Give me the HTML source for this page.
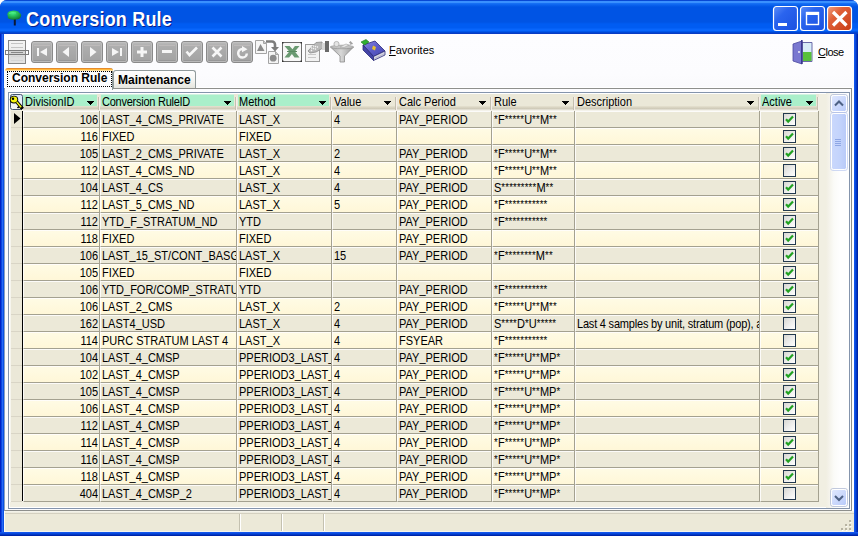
<!DOCTYPE html>
<html><head><meta charset="utf-8">
<style>
*{box-sizing:border-box}
html,body{margin:0;padding:0}
body{width:858px;height:536px;overflow:hidden;position:relative;background:#fff;font-family:"Liberation Sans",sans-serif;font-size:11px;color:#000}
.a{position:absolute}
#frame{position:absolute;left:0;top:0;width:858px;height:536px;background:linear-gradient(90deg,#0020c4 0,#0020c4 1px,#0a46de 1px,#0a46de 2px,#2a68f6 2px,#2a68f6 3px,#0a52e4 3px,#0a52e4 854px,#1256ec 854px,#1256ec 855px,#0a48dc 855px,#0a48dc 856px,#0038c4 856px,#0038c4 857px,#0024a8 857px);border-radius:7px 7px 0 0}
#fbot{position:absolute;left:0;top:532px;width:858px;height:4px;background:linear-gradient(180deg,#1256ec 0,#1256ec 1px,#0a48dc 1px,#0a48dc 2px,#0038c4 2px,#0038c4 3px,#0024a8 3px)}
#title{position:absolute;left:0;top:0;width:858px;height:34px;border-radius:7px 7px 0 0;
 background:linear-gradient(180deg,#0848d4 0,#0848d4 1px,#3a90fe 1px,#3a90fe 3px,#1a74f6 3px,#0a62ee 5px,#0054e4 7px,#0054e4 22px,#005cf2 24px,#005cf2 28px,#0866fc 29px,#0866fc 31px,#0056ea 31px,#0056ea 32px,#0046d4 32px,#0046d4 33px,#083cc4 33px,#083cc4 34px)}
#ttext{position:absolute;left:26px;top:9px;font-weight:bold;font-size:18px;letter-spacing:0.2px;color:#fff;text-shadow:1px 1px 0 #0a1e8c;transform:scaleY(1.08);transform-origin:0 0;white-space:nowrap}
#client{position:absolute;left:4px;top:34px;width:850px;height:498px;background:linear-gradient(180deg,#fffbff 0,#fdfdff 3px,#fcfcfe 40px,#fafafc 53px,#fff 53px,#fff 100%)}
.tb{position:absolute;top:41px;width:22px;height:22px}
#tabbody{position:absolute;left:4px;top:88px;width:848px;height:423px;background:#fcfcfe;border:1px solid #8e8f8c;border-left-color:#8ba0c0}
#grid{position:absolute;left:8px;top:92px;width:842px;height:417px;border:1px solid #8494ac;background:#fcfcfe}
#gridin{position:absolute;left:9px;top:93px;width:840px;height:415px;border:1px solid #fff;background:#f1efe2}
.hc{position:absolute;top:94px;height:17px;background:#ebe8d8}
.hc::before{content:"";position:absolute;left:0;right:0;top:12px;height:5px;background:linear-gradient(180deg,#e6e2d0 0,#ddd8c6 1px,#d4cfbd 2px,#cdc8b6 3px,#f4f2ea 4px)}
.hc .gb{position:absolute;left:1px;top:0;right:3px;height:12px}
.hc.first .gb{left:0}
.hc.g .gb{background:linear-gradient(180deg,#d2f2e0 0,#d2f2e0 1px,#aaefca 1px)}
.hc .ht{position:absolute;left:2px;top:1px;line-height:12px;white-space:nowrap;transform:scaleY(1.125);transform-origin:0 2px}
.hc::after{content:"";position:absolute;right:1px;top:3px;width:1px;height:13px;background:#c4bfb0;box-shadow:1px 0 0 #f6eeea}
.dd{position:absolute;right:6px;top:7px;width:7px;height:4px}
.row{position:absolute;left:0;width:858px;height:17px}
.c{position:absolute;top:0;height:17px;border-right:1px solid #a4a190;border-bottom:1px solid #a4a190;border-left:1px solid rgba(255,255,255,.85);border-top:1px solid rgba(255,255,255,.85);padding:0 1px;line-height:15px;white-space:nowrap;overflow:hidden}
.ra .c{background:#ece9d8}
.rb .c{background:linear-gradient(180deg,#fffbe4,#fff7d8)}
.num{text-align:right;padding-right:1px}
.desc{letter-spacing:-0.2px}
.us{font-style:normal;position:relative;top:-1px}
.as{font-style:normal;font-size:9.5px;letter-spacing:0.2px;position:relative;top:-1px}
.c b{font-weight:normal;display:inline-block;transform:scaleY(1.125);transform-origin:0 3px}
.cb{position:absolute;left:22px;top:1px;width:13px;height:13px;border:1px solid #22384e;background:linear-gradient(135deg,#d8d8d2 0,#ececea 50%,#fff 100%)}
.ck{position:absolute;left:-1px;top:-1px}
#ind{position:absolute;left:10px;top:111px;width:12px;height:391px;background:repeating-linear-gradient(180deg,#ebe8d8 0,#ebe8d8 16px,#d9d5c6 16px,#d9d5c6 17px);border-left:1px solid #f6f5ee}
#indl{position:absolute;left:22px;top:111px;width:1px;height:390px;background:#000}
#sb{position:absolute;left:826px;top:93px;width:23px;height:415px;background:linear-gradient(90deg,#f1efe2 0,#f3f1e7 2px,#fbfbf8 8px,#fefefe 14px,#fefefe 100%)}
#status{position:absolute;left:4px;top:511px;width:850px;height:21px;background:linear-gradient(180deg,#f6f5ee 0,#ebe8da 2px,#d4d0c0 2px,#d4d0c0 3px,#ece9d8 3px,#ece9d8 20px,#f4f3ec 20px);border-left:1px solid #fafaf6}
</style></head><body>
<div id="frame"></div>
<div id="fbot"></div>
<div id="title"></div>
<div id="ttext">Conversion Rule</div>
<div id="client"></div>
<svg class="a" style="left:0;top:0" width="858" height="70" viewBox="0 0 858 70">
<defs>
<linearGradient id="bg" x1="0" y1="0" x2="0" y2="1"><stop offset="0" stop-color="#bebebe"/><stop offset="0.18" stop-color="#afafaf"/><stop offset="1" stop-color="#a2a2a2"/></linearGradient>
<linearGradient id="lst" x1="0" y1="0" x2="0" y2="1"><stop offset="0" stop-color="#f4f4f4"/><stop offset="0.45" stop-color="#ececec"/><stop offset="0.55" stop-color="#d8d8d8"/><stop offset="1" stop-color="#e4e4e4"/></linearGradient>
</defs>
<!-- list icon -->
<rect x="8.5" y="40.5" width="17" height="23" fill="url(#lst)" stroke="#858585"/>
<path d="M11 43.5h12M11 47.5h12" stroke="#c4c4c4" stroke-width="1"/><path d="M11 56.5h12M11 60.5h12" stroke="#d4d4d4" stroke-width="1"/>
<rect x="5.5" y="50.5" width="23" height="4" fill="none" stroke="#7c7c7c"/>
<rect x="9" y="51" width="16" height="3" fill="#d4d4d4"/>
<path d="M11 52.5h12" stroke="#888" />
<g transform="translate(31,41)">
<rect x="0.5" y="0.5" width="21" height="21" rx="2.5" fill="url(#bg)" stroke="#8a8a8a"/>
<rect x="1.5" y="1.5" width="19" height="19" rx="1.5" fill="none" stroke="#c2c2c2" stroke-opacity="0.75"/>
<path d="M3 4.5h16" stroke="#cfc8c8" stroke-opacity="0.45"/>
<path d="M2.5 19.5h17" stroke="#8f8f8f" stroke-opacity="0.6"/>
<rect x="6" y="7" width="2" height="8" fill="#f6f6f6"/><path d="M9 11 L16 7 L16 15 Z" fill="#f6f6f6"/></g><g transform="translate(56,41)">
<rect x="0.5" y="0.5" width="21" height="21" rx="2.5" fill="url(#bg)" stroke="#8a8a8a"/>
<rect x="1.5" y="1.5" width="19" height="19" rx="1.5" fill="none" stroke="#c2c2c2" stroke-opacity="0.75"/>
<path d="M3 4.5h16" stroke="#cfc8c8" stroke-opacity="0.45"/>
<path d="M2.5 19.5h17" stroke="#8f8f8f" stroke-opacity="0.6"/>
<path d="M6.5 11 L13 6 L13 16 Z" fill="#f6f6f6"/></g><g transform="translate(81,41)">
<rect x="0.5" y="0.5" width="21" height="21" rx="2.5" fill="url(#bg)" stroke="#8a8a8a"/>
<rect x="1.5" y="1.5" width="19" height="19" rx="1.5" fill="none" stroke="#c2c2c2" stroke-opacity="0.75"/>
<path d="M3 4.5h16" stroke="#cfc8c8" stroke-opacity="0.45"/>
<path d="M2.5 19.5h17" stroke="#8f8f8f" stroke-opacity="0.6"/>
<path d="M9 6 L15.5 11 L9 16 Z" fill="#f6f6f6"/></g><g transform="translate(106,41)">
<rect x="0.5" y="0.5" width="21" height="21" rx="2.5" fill="url(#bg)" stroke="#8a8a8a"/>
<rect x="1.5" y="1.5" width="19" height="19" rx="1.5" fill="none" stroke="#c2c2c2" stroke-opacity="0.75"/>
<path d="M3 4.5h16" stroke="#cfc8c8" stroke-opacity="0.45"/>
<path d="M2.5 19.5h17" stroke="#8f8f8f" stroke-opacity="0.6"/>
<path d="M6 7 L13 11 L6 15 Z" fill="#f6f6f6"/><rect x="14" y="7" width="2" height="8" fill="#f6f6f6"/></g><g transform="translate(131,41)">
<rect x="0.5" y="0.5" width="21" height="21" rx="2.5" fill="url(#bg)" stroke="#8a8a8a"/>
<rect x="1.5" y="1.5" width="19" height="19" rx="1.5" fill="none" stroke="#c2c2c2" stroke-opacity="0.75"/>
<path d="M3 4.5h16" stroke="#cfc8c8" stroke-opacity="0.45"/>
<path d="M2.5 19.5h17" stroke="#8f8f8f" stroke-opacity="0.6"/>
<rect x="9.5" y="6" width="3" height="10" fill="#f6f6f6"/><rect x="6" y="9.5" width="10" height="3" fill="#f6f6f6"/></g><g transform="translate(156,41)">
<rect x="0.5" y="0.5" width="21" height="21" rx="2.5" fill="url(#bg)" stroke="#8a8a8a"/>
<rect x="1.5" y="1.5" width="19" height="19" rx="1.5" fill="none" stroke="#c2c2c2" stroke-opacity="0.75"/>
<path d="M3 4.5h16" stroke="#cfc8c8" stroke-opacity="0.45"/>
<path d="M2.5 19.5h17" stroke="#8f8f8f" stroke-opacity="0.6"/>
<rect x="6" y="9" width="10" height="3" fill="#f6f6f6"/></g><g transform="translate(181,41)">
<rect x="0.5" y="0.5" width="21" height="21" rx="2.5" fill="url(#bg)" stroke="#8a8a8a"/>
<rect x="1.5" y="1.5" width="19" height="19" rx="1.5" fill="none" stroke="#c2c2c2" stroke-opacity="0.75"/>
<path d="M3 4.5h16" stroke="#cfc8c8" stroke-opacity="0.45"/>
<path d="M2.5 19.5h17" stroke="#8f8f8f" stroke-opacity="0.6"/>
<path d="M5.5 10.5 L8.5 14 L16 6.5" fill="none" stroke="#f6f6f6" stroke-width="2.6"/></g><g transform="translate(206,41)">
<rect x="0.5" y="0.5" width="21" height="21" rx="2.5" fill="url(#bg)" stroke="#8a8a8a"/>
<rect x="1.5" y="1.5" width="19" height="19" rx="1.5" fill="none" stroke="#c2c2c2" stroke-opacity="0.75"/>
<path d="M3 4.5h16" stroke="#cfc8c8" stroke-opacity="0.45"/>
<path d="M2.5 19.5h17" stroke="#8f8f8f" stroke-opacity="0.6"/>
<path d="M6.5 6.5 L15.5 15.5 M15.5 6.5 L6.5 15.5" stroke="#f6f6f6" stroke-width="2.6"/></g><g transform="translate(231,41)">
<rect x="0.5" y="0.5" width="21" height="21" rx="2.5" fill="url(#bg)" stroke="#8a8a8a"/>
<rect x="1.5" y="1.5" width="19" height="19" rx="1.5" fill="none" stroke="#c2c2c2" stroke-opacity="0.75"/>
<path d="M3 4.5h16" stroke="#cfc8c8" stroke-opacity="0.45"/>
<path d="M2.5 19.5h17" stroke="#8f8f8f" stroke-opacity="0.6"/>
<path d="M11.5 8 A4.3 4.3 0 1 0 15.8 12.5" fill="none" stroke="#f6f6f6" stroke-width="2.5"/><path d="M11 5 L16.5 8.2 L11 11.2 Z" fill="#f6f6f6"/></g>
<!-- copy/convert icon -->
<g>
<path d="M255.5 40.5 h8 l3 3 v10 h-11 z" fill="#f6f6f6" stroke="#a4a4a4"/>
<path d="M263.5 40.5 v3 h3" fill="#c8c8c8" stroke="#a4a4a4"/>
<path d="M257 51 L260.5 44 L264.5 51 Z" fill="#8a8a8a"/>
<path d="M268.5 51.5 h7 l3 3 v9 h-10 z" fill="#f4f4f4" stroke="#a4a4a4"/>
<path d="M275.5 51.5 v3 h3" fill="#c8c8c8" stroke="#a4a4a4"/>
<circle cx="273.2" cy="58.2" r="3.4" fill="#8c8c8c"/>
<path d="M266 41.5 h6 a3 3 0 0 1 3 3 v3" fill="none" stroke="#7c7c7c" stroke-width="2.6"/>
<path d="M271 47 h8 l-4 4.5 z" fill="#7c7c7c"/>
</g>
<!-- excel icon -->
<g>
<rect x="282.5" y="42.5" width="19" height="19" fill="#f8f8f8" stroke="#6c6c6c"/>
<path d="M282 42h1.5v1.5h-1.5zM300.5 42h1.5v1.5h-1.5zM282 60.5h1.5v1.5h-1.5zM300.5 60.5h1.5v1.5h-1.5z" fill="#333"/>
<path d="M284.5 46 h5 l3 3.2 l2.4 -3.2 h4.6 l-4.6 5.6 l4.6 5.8 h-5 l-2.6 -3.4 l-2.8 3.4 h-4.6 l4.8 -5.8 z" fill="#6a9a72"/>
<path d="M287 51.5 h10" stroke="#5a8a62" stroke-width="1"/>
</g>
<!-- clipboard/hand icon -->
<g>
<rect x="305.5" y="44.5" width="14" height="17" fill="#f2f2f2" stroke="#9a9a9a"/>
<path d="M308 54.5h8M308 57.5h8" stroke="#c8c8c8"/>
<path d="M308 51 L316 42.5 L322 42 L323 48 L316 52 L310 53 Z" fill="#b8b8b8" stroke="#8a8a8a" stroke-width="0.8"/>
<path d="M311 48.5l1 -1M313 46.5l1 -1M313 49l1 -1M315 47l1 -1M315 49.5l1 -1M317 47.5l1 -1M311 51l1 -1" stroke="#f4f4f4" stroke-width="1.2"/>
<rect x="322" y="43" width="3" height="7" fill="#d8d8d8"/>
<rect x="325" y="41" width="4" height="11" fill="#6a6a6a"/>
</g>
<!-- funnel -->
<g>
<defs><linearGradient id="fn" x1="0" y1="0" x2="1" y2="0"><stop offset="0" stop-color="#a8a8a8"/><stop offset="0.45" stop-color="#d8d8d8"/><stop offset="1" stop-color="#9a9a9a"/></linearGradient></defs>
<path d="M330.5 47 L353.5 47 L344.5 56 L344.5 62 L340 62 L340 56 Z" fill="url(#fn)" stroke="#8c8c8c" stroke-width="0.8"/>
<ellipse cx="342" cy="47" rx="11.5" ry="1.8" fill="#c4c4c4" stroke="#8c8c8c" stroke-width="0.6"/>
<circle cx="336.5" cy="44" r="2.6" fill="#e4e4e4" stroke="#a0a0a0" stroke-width="0.7"/>
<path d="M340 47 L346 44 L349 45 L344 47.5 Z" fill="#e8e8e8" stroke="#a4a4a4" stroke-width="0.6"/>
<path d="M349 45 L352 42.5 L353 44 Z" fill="#9a9a9a"/>
<path d="M350.5 41 l1.5 1.5 l-1.5 1.5 l-1.5 -1.5 z" fill="#a0a0a0"/>
</g>
<!-- book -->
<g>
<defs><linearGradient id="bk" x1="0" y1="0" x2="1" y2="1"><stop offset="0" stop-color="#8888e0"/><stop offset="0.5" stop-color="#5c5cc8"/><stop offset="1" stop-color="#4848b0"/></linearGradient></defs>
<path d="M363 45 L375 41 L385 51 L373.5 56.5 Z" fill="url(#bk)" stroke="#2a2a78" stroke-width="0.8"/>
<path d="M363 45 L373.5 56.5 L373.5 60.5 L363 50 Z" fill="#4444a8" stroke="#2a2a78" stroke-width="0.8"/>
<path d="M373.5 56.5 L385 51 L385 55 L373.5 60.5 Z" fill="#d8d8e4" stroke="#2a2a78" stroke-width="0.8"/>
<path d="M374.5 58.5 L384 54" stroke="#a0a0b8" stroke-width="0.6"/>
<path d="M373 45.5 l3 1.5 l-1 3.5 l-3 -1.5 z" fill="#e8c030"/>
<path d="M361 42 L366 39.5 L369 42 L364.5 45 Z" fill="#30b030" stroke="#1a701a" stroke-width="0.6"/>
</g>
<!-- door -->
<g>
<path d="M802 42.5 h10 v19 h-10 z" fill="#d8ecf8" stroke="#6a6aa8"/>
<rect x="803" y="52" width="8.5" height="9" fill="#58c03c"/>
<path d="M793 44 L802 41 L802 64 L793 61 Z" fill="#7a78d0" stroke="#4a48a0" stroke-width="0.8"/>
<rect x="801" y="40" width="1.6" height="24" fill="#3a3890"/>
<circle cx="799" cy="52" r="0.9" fill="#fff"/>
</g>
</svg><div class="a" style="left:389px;top:44px;font-size:11px;line-height:13px"><u>F</u>avorites</div><div class="a" style="left:818px;top:46px;font-size:11px;line-height:13px;letter-spacing:-0.5px"><u>C</u>lose</div>
<div id="tabbody"></div>

<div id="tabbar" class="a" style="left:5px;top:87px;width:108px;height:3px;background:#fcfcfe"></div>
<div id="tab1" class="a" style="left:5px;top:68px;width:108px;height:22px;background:#fcfcfe;border-right:1px solid #919b9c;border-radius:3px 3px 0 0">
 <div class="a" style="left:0;top:0;width:108px;height:3px;background:linear-gradient(180deg,#e68b2c 0,#e68b2c 1px,#ffb83c 1px,#ffb83c 2px,#ffe0a0 2px);border-radius:3px 3px 0 0"></div>
 <div class="a" style="left:2px;top:3px;width:105px;height:16px;border:1px dotted #000"></div>
 <div class="a" style="left:7px;top:2px;font-weight:bold;font-size:12px;line-height:16px;white-space:nowrap">Conversion Rule</div>
</div>
<div id="tab2" class="a" style="left:113px;top:70px;width:83px;height:18px;background:linear-gradient(180deg,#fff,#f3f3ef 60%,#e6e6df);border:1px solid #919b9c;border-bottom:none;border-radius:3px 3px 0 0">
 <div class="a" style="left:4px;top:1px;font-weight:bold;font-size:12px;line-height:16px;white-space:nowrap">Maintenance</div>
</div>
<div id="grid"></div>
<div id="gridin"></div>
<div class="hc g first" style="left:23px;width:77px"><div class="gb"></div><span class="ht">DivisionID</span><svg class="dd" width="7" height="4" shape-rendering="crispEdges"><rect x="0" y="0" width="7" height="1"/><rect x="1" y="1" width="5" height="1"/><rect x="2" y="2" width="3" height="1"/><rect x="3" y="3" width="1" height="1"/></svg></div><div class="hc g" style="left:100px;width:137px"><div class="gb"></div><span class="ht" style="letter-spacing:-0.25px">Conversion RuleID</span><svg class="dd" width="7" height="4" shape-rendering="crispEdges"><rect x="0" y="0" width="7" height="1"/><rect x="1" y="1" width="5" height="1"/><rect x="2" y="2" width="3" height="1"/><rect x="3" y="3" width="1" height="1"/></svg></div><div class="hc g" style="left:237px;width:95px"><div class="gb"></div><span class="ht">Method</span><svg class="dd" width="7" height="4" shape-rendering="crispEdges"><rect x="0" y="0" width="7" height="1"/><rect x="1" y="1" width="5" height="1"/><rect x="2" y="2" width="3" height="1"/><rect x="3" y="3" width="1" height="1"/></svg></div><div class="hc" style="left:332px;width:65px"><div class="gb"></div><span class="ht">Value</span><svg class="dd" width="7" height="4" shape-rendering="crispEdges"><rect x="0" y="0" width="7" height="1"/><rect x="1" y="1" width="5" height="1"/><rect x="2" y="2" width="3" height="1"/><rect x="3" y="3" width="1" height="1"/></svg></div><div class="hc" style="left:397px;width:95px"><div class="gb"></div><span class="ht">Calc Period</span><svg class="dd" width="7" height="4" shape-rendering="crispEdges"><rect x="0" y="0" width="7" height="1"/><rect x="1" y="1" width="5" height="1"/><rect x="2" y="2" width="3" height="1"/><rect x="3" y="3" width="1" height="1"/></svg></div><div class="hc" style="left:492px;width:83px"><div class="gb"></div><span class="ht">Rule</span><svg class="dd" width="7" height="4" shape-rendering="crispEdges"><rect x="0" y="0" width="7" height="1"/><rect x="1" y="1" width="5" height="1"/><rect x="2" y="2" width="3" height="1"/><rect x="3" y="3" width="1" height="1"/></svg></div><div class="hc" style="left:575px;width:185px"><div class="gb"></div><span class="ht">Description</span><svg class="dd" width="7" height="4" shape-rendering="crispEdges"><rect x="0" y="0" width="7" height="1"/><rect x="1" y="1" width="5" height="1"/><rect x="2" y="2" width="3" height="1"/><rect x="3" y="3" width="1" height="1"/></svg></div><div class="hc g" style="left:760px;width:59px"><div class="gb"></div><span class="ht">Active</span><svg class="dd" width="7" height="4" shape-rendering="crispEdges"><rect x="0" y="0" width="7" height="1"/><rect x="1" y="1" width="5" height="1"/><rect x="2" y="2" width="3" height="1"/><rect x="3" y="3" width="1" height="1"/></svg></div>
<div id="ind"></div>
<div id="indl"></div>
<div class="row ra" style="top:111px"><div class="c num" style="left:23px;width:77px"><b>106</b></div><div class="c" style="left:100px;width:137px"><b>LAST<i class="us">_</i>4<i class="us">_</i>CMS<i class="us">_</i>PRIVATE</b></div><div class="c" style="left:237px;width:95px"><b>LAST<i class="us">_</i>X</b></div><div class="c" style="left:332px;width:65px"><b>4</b></div><div class="c" style="left:397px;width:95px"><b>PAY<i class="us">_</i>PERIOD</b></div><div class="c" style="left:492px;width:83px"><b><i class="as">*</i>F<i class="as">*****</i>U<i class="as">**</i>M<i class="as">**</i></b></div><div class="c" style="left:575px;width:185px"><b></b></div><div class="c" style="left:760px;width:59px"><i class="cb"><svg width="13" height="13" class="ck"><path d="M3 6.2 L5.2 8.6 L10 3.6" fill="none" stroke="#21a121" stroke-width="2.2"/></svg></i></div></div>
<div class="row rb" style="top:128px"><div class="c num" style="left:23px;width:77px"><b>116</b></div><div class="c" style="left:100px;width:137px"><b>FIXED</b></div><div class="c" style="left:237px;width:95px"><b>FIXED</b></div><div class="c" style="left:332px;width:65px"><b></b></div><div class="c" style="left:397px;width:95px"><b></b></div><div class="c" style="left:492px;width:83px"><b></b></div><div class="c" style="left:575px;width:185px"><b></b></div><div class="c" style="left:760px;width:59px"><i class="cb"><svg width="13" height="13" class="ck"><path d="M3 6.2 L5.2 8.6 L10 3.6" fill="none" stroke="#21a121" stroke-width="2.2"/></svg></i></div></div>
<div class="row ra" style="top:145px"><div class="c num" style="left:23px;width:77px"><b>105</b></div><div class="c" style="left:100px;width:137px"><b>LAST<i class="us">_</i>2<i class="us">_</i>CMS<i class="us">_</i>PRIVATE</b></div><div class="c" style="left:237px;width:95px"><b>LAST<i class="us">_</i>X</b></div><div class="c" style="left:332px;width:65px"><b>2</b></div><div class="c" style="left:397px;width:95px"><b>PAY<i class="us">_</i>PERIOD</b></div><div class="c" style="left:492px;width:83px"><b><i class="as">*</i>F<i class="as">*****</i>U<i class="as">**</i>M<i class="as">**</i></b></div><div class="c" style="left:575px;width:185px"><b></b></div><div class="c" style="left:760px;width:59px"><i class="cb"><svg width="13" height="13" class="ck"><path d="M3 6.2 L5.2 8.6 L10 3.6" fill="none" stroke="#21a121" stroke-width="2.2"/></svg></i></div></div>
<div class="row rb" style="top:162px"><div class="c num" style="left:23px;width:77px"><b>112</b></div><div class="c" style="left:100px;width:137px"><b>LAST<i class="us">_</i>4<i class="us">_</i>CMS<i class="us">_</i>ND</b></div><div class="c" style="left:237px;width:95px"><b>LAST<i class="us">_</i>X</b></div><div class="c" style="left:332px;width:65px"><b>4</b></div><div class="c" style="left:397px;width:95px"><b>PAY<i class="us">_</i>PERIOD</b></div><div class="c" style="left:492px;width:83px"><b><i class="as">*</i>F<i class="as">*****</i>U<i class="as">**</i>M<i class="as">**</i></b></div><div class="c" style="left:575px;width:185px"><b></b></div><div class="c" style="left:760px;width:59px"><i class="cb"></i></div></div>
<div class="row ra" style="top:179px"><div class="c num" style="left:23px;width:77px"><b>104</b></div><div class="c" style="left:100px;width:137px"><b>LAST<i class="us">_</i>4<i class="us">_</i>CS</b></div><div class="c" style="left:237px;width:95px"><b>LAST<i class="us">_</i>X</b></div><div class="c" style="left:332px;width:65px"><b>4</b></div><div class="c" style="left:397px;width:95px"><b>PAY<i class="us">_</i>PERIOD</b></div><div class="c" style="left:492px;width:83px"><b>S<i class="as">*********</i>M<i class="as">**</i></b></div><div class="c" style="left:575px;width:185px"><b></b></div><div class="c" style="left:760px;width:59px"><i class="cb"><svg width="13" height="13" class="ck"><path d="M3 6.2 L5.2 8.6 L10 3.6" fill="none" stroke="#21a121" stroke-width="2.2"/></svg></i></div></div>
<div class="row rb" style="top:196px"><div class="c num" style="left:23px;width:77px"><b>112</b></div><div class="c" style="left:100px;width:137px"><b>LAST<i class="us">_</i>5<i class="us">_</i>CMS<i class="us">_</i>ND</b></div><div class="c" style="left:237px;width:95px"><b>LAST<i class="us">_</i>X</b></div><div class="c" style="left:332px;width:65px"><b>5</b></div><div class="c" style="left:397px;width:95px"><b>PAY<i class="us">_</i>PERIOD</b></div><div class="c" style="left:492px;width:83px"><b><i class="as">*</i>F<i class="as">***********</i></b></div><div class="c" style="left:575px;width:185px"><b></b></div><div class="c" style="left:760px;width:59px"><i class="cb"><svg width="13" height="13" class="ck"><path d="M3 6.2 L5.2 8.6 L10 3.6" fill="none" stroke="#21a121" stroke-width="2.2"/></svg></i></div></div>
<div class="row ra" style="top:213px"><div class="c num" style="left:23px;width:77px"><b>112</b></div><div class="c" style="left:100px;width:137px"><b>YTD<i class="us">_</i>F<i class="us">_</i>STRATUM<i class="us">_</i>ND</b></div><div class="c" style="left:237px;width:95px"><b>YTD</b></div><div class="c" style="left:332px;width:65px"><b></b></div><div class="c" style="left:397px;width:95px"><b>PAY<i class="us">_</i>PERIOD</b></div><div class="c" style="left:492px;width:83px"><b><i class="as">*</i>F<i class="as">***********</i></b></div><div class="c" style="left:575px;width:185px"><b></b></div><div class="c" style="left:760px;width:59px"><i class="cb"><svg width="13" height="13" class="ck"><path d="M3 6.2 L5.2 8.6 L10 3.6" fill="none" stroke="#21a121" stroke-width="2.2"/></svg></i></div></div>
<div class="row rb" style="top:230px"><div class="c num" style="left:23px;width:77px"><b>118</b></div><div class="c" style="left:100px;width:137px"><b>FIXED</b></div><div class="c" style="left:237px;width:95px"><b>FIXED</b></div><div class="c" style="left:332px;width:65px"><b></b></div><div class="c" style="left:397px;width:95px"><b>PAY<i class="us">_</i>PERIOD</b></div><div class="c" style="left:492px;width:83px"><b></b></div><div class="c" style="left:575px;width:185px"><b></b></div><div class="c" style="left:760px;width:59px"><i class="cb"><svg width="13" height="13" class="ck"><path d="M3 6.2 L5.2 8.6 L10 3.6" fill="none" stroke="#21a121" stroke-width="2.2"/></svg></i></div></div>
<div class="row ra" style="top:247px"><div class="c num" style="left:23px;width:77px"><b>106</b></div><div class="c" style="left:100px;width:137px"><b>LAST<i class="us">_</i>15<i class="us">_</i>ST/CONT<i class="us">_</i>BASG</b></div><div class="c" style="left:237px;width:95px"><b>LAST<i class="us">_</i>X</b></div><div class="c" style="left:332px;width:65px"><b>15</b></div><div class="c" style="left:397px;width:95px"><b>PAY<i class="us">_</i>PERIOD</b></div><div class="c" style="left:492px;width:83px"><b><i class="as">*</i>F<i class="as">********</i>M<i class="as">**</i></b></div><div class="c" style="left:575px;width:185px"><b></b></div><div class="c" style="left:760px;width:59px"><i class="cb"><svg width="13" height="13" class="ck"><path d="M3 6.2 L5.2 8.6 L10 3.6" fill="none" stroke="#21a121" stroke-width="2.2"/></svg></i></div></div>
<div class="row rb" style="top:264px"><div class="c num" style="left:23px;width:77px"><b>105</b></div><div class="c" style="left:100px;width:137px"><b>FIXED</b></div><div class="c" style="left:237px;width:95px"><b>FIXED</b></div><div class="c" style="left:332px;width:65px"><b></b></div><div class="c" style="left:397px;width:95px"><b></b></div><div class="c" style="left:492px;width:83px"><b></b></div><div class="c" style="left:575px;width:185px"><b></b></div><div class="c" style="left:760px;width:59px"><i class="cb"><svg width="13" height="13" class="ck"><path d="M3 6.2 L5.2 8.6 L10 3.6" fill="none" stroke="#21a121" stroke-width="2.2"/></svg></i></div></div>
<div class="row ra" style="top:281px"><div class="c num" style="left:23px;width:77px"><b>106</b></div><div class="c" style="left:100px;width:137px"><b>YTD<i class="us">_</i>FOR/COMP<i class="us">_</i>STRATU</b></div><div class="c" style="left:237px;width:95px"><b>YTD</b></div><div class="c" style="left:332px;width:65px"><b></b></div><div class="c" style="left:397px;width:95px"><b>PAY<i class="us">_</i>PERIOD</b></div><div class="c" style="left:492px;width:83px"><b><i class="as">*</i>F<i class="as">***********</i></b></div><div class="c" style="left:575px;width:185px"><b></b></div><div class="c" style="left:760px;width:59px"><i class="cb"><svg width="13" height="13" class="ck"><path d="M3 6.2 L5.2 8.6 L10 3.6" fill="none" stroke="#21a121" stroke-width="2.2"/></svg></i></div></div>
<div class="row rb" style="top:298px"><div class="c num" style="left:23px;width:77px"><b>106</b></div><div class="c" style="left:100px;width:137px"><b>LAST<i class="us">_</i>2<i class="us">_</i>CMS</b></div><div class="c" style="left:237px;width:95px"><b>LAST<i class="us">_</i>X</b></div><div class="c" style="left:332px;width:65px"><b>2</b></div><div class="c" style="left:397px;width:95px"><b>PAY<i class="us">_</i>PERIOD</b></div><div class="c" style="left:492px;width:83px"><b><i class="as">*</i>F<i class="as">*****</i>U<i class="as">**</i>M<i class="as">**</i></b></div><div class="c" style="left:575px;width:185px"><b></b></div><div class="c" style="left:760px;width:59px"><i class="cb"><svg width="13" height="13" class="ck"><path d="M3 6.2 L5.2 8.6 L10 3.6" fill="none" stroke="#21a121" stroke-width="2.2"/></svg></i></div></div>
<div class="row ra" style="top:315px"><div class="c num" style="left:23px;width:77px"><b>162</b></div><div class="c" style="left:100px;width:137px"><b>LAST4<i class="us">_</i>USD</b></div><div class="c" style="left:237px;width:95px"><b>LAST<i class="us">_</i>X</b></div><div class="c" style="left:332px;width:65px"><b>4</b></div><div class="c" style="left:397px;width:95px"><b>PAY<i class="us">_</i>PERIOD</b></div><div class="c" style="left:492px;width:83px"><b>S<i class="as">****</i>D<i class="as">*</i>U<i class="as">*****</i></b></div><div class="c desc" style="left:575px;width:185px"><b>Last 4 samples by unit, stratum (pop), a</b></div><div class="c" style="left:760px;width:59px"><i class="cb"></i></div></div>
<div class="row rb" style="top:332px"><div class="c num" style="left:23px;width:77px"><b>114</b></div><div class="c" style="left:100px;width:137px"><b>PURC STRATUM LAST 4</b></div><div class="c" style="left:237px;width:95px"><b>LAST<i class="us">_</i>X</b></div><div class="c" style="left:332px;width:65px"><b>4</b></div><div class="c" style="left:397px;width:95px"><b>FSYEAR</b></div><div class="c" style="left:492px;width:83px"><b><i class="as">*</i>F<i class="as">***********</i></b></div><div class="c" style="left:575px;width:185px"><b></b></div><div class="c" style="left:760px;width:59px"><i class="cb"></i></div></div>
<div class="row ra" style="top:349px"><div class="c num" style="left:23px;width:77px"><b>104</b></div><div class="c" style="left:100px;width:137px"><b>LAST<i class="us">_</i>4<i class="us">_</i>CMSP</b></div><div class="c" style="left:237px;width:95px"><b>PPERIOD3<i class="us">_</i>LAST<i class="us">_</i></b></div><div class="c" style="left:332px;width:65px"><b>4</b></div><div class="c" style="left:397px;width:95px"><b>PAY<i class="us">_</i>PERIOD</b></div><div class="c" style="left:492px;width:83px"><b><i class="as">*</i>F<i class="as">*****</i>U<i class="as">**</i>MP<i class="as">*</i></b></div><div class="c" style="left:575px;width:185px"><b></b></div><div class="c" style="left:760px;width:59px"><i class="cb"><svg width="13" height="13" class="ck"><path d="M3 6.2 L5.2 8.6 L10 3.6" fill="none" stroke="#21a121" stroke-width="2.2"/></svg></i></div></div>
<div class="row rb" style="top:366px"><div class="c num" style="left:23px;width:77px"><b>102</b></div><div class="c" style="left:100px;width:137px"><b>LAST<i class="us">_</i>4<i class="us">_</i>CMSP</b></div><div class="c" style="left:237px;width:95px"><b>PPERIOD3<i class="us">_</i>LAST<i class="us">_</i></b></div><div class="c" style="left:332px;width:65px"><b>4</b></div><div class="c" style="left:397px;width:95px"><b>PAY<i class="us">_</i>PERIOD</b></div><div class="c" style="left:492px;width:83px"><b><i class="as">*</i>F<i class="as">*****</i>U<i class="as">**</i>MP<i class="as">*</i></b></div><div class="c" style="left:575px;width:185px"><b></b></div><div class="c" style="left:760px;width:59px"><i class="cb"><svg width="13" height="13" class="ck"><path d="M3 6.2 L5.2 8.6 L10 3.6" fill="none" stroke="#21a121" stroke-width="2.2"/></svg></i></div></div>
<div class="row ra" style="top:383px"><div class="c num" style="left:23px;width:77px"><b>105</b></div><div class="c" style="left:100px;width:137px"><b>LAST<i class="us">_</i>4<i class="us">_</i>CMSP</b></div><div class="c" style="left:237px;width:95px"><b>PPERIOD3<i class="us">_</i>LAST<i class="us">_</i></b></div><div class="c" style="left:332px;width:65px"><b>4</b></div><div class="c" style="left:397px;width:95px"><b>PAY<i class="us">_</i>PERIOD</b></div><div class="c" style="left:492px;width:83px"><b><i class="as">*</i>F<i class="as">*****</i>U<i class="as">**</i>MP<i class="as">*</i></b></div><div class="c" style="left:575px;width:185px"><b></b></div><div class="c" style="left:760px;width:59px"><i class="cb"><svg width="13" height="13" class="ck"><path d="M3 6.2 L5.2 8.6 L10 3.6" fill="none" stroke="#21a121" stroke-width="2.2"/></svg></i></div></div>
<div class="row rb" style="top:400px"><div class="c num" style="left:23px;width:77px"><b>106</b></div><div class="c" style="left:100px;width:137px"><b>LAST<i class="us">_</i>4<i class="us">_</i>CMSP</b></div><div class="c" style="left:237px;width:95px"><b>PPERIOD3<i class="us">_</i>LAST<i class="us">_</i></b></div><div class="c" style="left:332px;width:65px"><b>4</b></div><div class="c" style="left:397px;width:95px"><b>PAY<i class="us">_</i>PERIOD</b></div><div class="c" style="left:492px;width:83px"><b><i class="as">*</i>F<i class="as">*****</i>U<i class="as">**</i>MP<i class="as">*</i></b></div><div class="c" style="left:575px;width:185px"><b></b></div><div class="c" style="left:760px;width:59px"><i class="cb"><svg width="13" height="13" class="ck"><path d="M3 6.2 L5.2 8.6 L10 3.6" fill="none" stroke="#21a121" stroke-width="2.2"/></svg></i></div></div>
<div class="row ra" style="top:417px"><div class="c num" style="left:23px;width:77px"><b>112</b></div><div class="c" style="left:100px;width:137px"><b>LAST<i class="us">_</i>4<i class="us">_</i>CMSP</b></div><div class="c" style="left:237px;width:95px"><b>PPERIOD3<i class="us">_</i>LAST<i class="us">_</i></b></div><div class="c" style="left:332px;width:65px"><b>4</b></div><div class="c" style="left:397px;width:95px"><b>PAY<i class="us">_</i>PERIOD</b></div><div class="c" style="left:492px;width:83px"><b><i class="as">*</i>F<i class="as">*****</i>U<i class="as">**</i>MP<i class="as">*</i></b></div><div class="c" style="left:575px;width:185px"><b></b></div><div class="c" style="left:760px;width:59px"><i class="cb"></i></div></div>
<div class="row rb" style="top:434px"><div class="c num" style="left:23px;width:77px"><b>114</b></div><div class="c" style="left:100px;width:137px"><b>LAST<i class="us">_</i>4<i class="us">_</i>CMSP</b></div><div class="c" style="left:237px;width:95px"><b>PPERIOD3<i class="us">_</i>LAST<i class="us">_</i></b></div><div class="c" style="left:332px;width:65px"><b>4</b></div><div class="c" style="left:397px;width:95px"><b>PAY<i class="us">_</i>PERIOD</b></div><div class="c" style="left:492px;width:83px"><b><i class="as">*</i>F<i class="as">*****</i>U<i class="as">**</i>MP<i class="as">*</i></b></div><div class="c" style="left:575px;width:185px"><b></b></div><div class="c" style="left:760px;width:59px"><i class="cb"><svg width="13" height="13" class="ck"><path d="M3 6.2 L5.2 8.6 L10 3.6" fill="none" stroke="#21a121" stroke-width="2.2"/></svg></i></div></div>
<div class="row ra" style="top:451px"><div class="c num" style="left:23px;width:77px"><b>116</b></div><div class="c" style="left:100px;width:137px"><b>LAST<i class="us">_</i>4<i class="us">_</i>CMSP</b></div><div class="c" style="left:237px;width:95px"><b>PPERIOD3<i class="us">_</i>LAST<i class="us">_</i></b></div><div class="c" style="left:332px;width:65px"><b>4</b></div><div class="c" style="left:397px;width:95px"><b>PAY<i class="us">_</i>PERIOD</b></div><div class="c" style="left:492px;width:83px"><b><i class="as">*</i>F<i class="as">*****</i>U<i class="as">**</i>MP<i class="as">*</i></b></div><div class="c" style="left:575px;width:185px"><b></b></div><div class="c" style="left:760px;width:59px"><i class="cb"><svg width="13" height="13" class="ck"><path d="M3 6.2 L5.2 8.6 L10 3.6" fill="none" stroke="#21a121" stroke-width="2.2"/></svg></i></div></div>
<div class="row rb" style="top:468px"><div class="c num" style="left:23px;width:77px"><b>118</b></div><div class="c" style="left:100px;width:137px"><b>LAST<i class="us">_</i>4<i class="us">_</i>CMSP</b></div><div class="c" style="left:237px;width:95px"><b>PPERIOD3<i class="us">_</i>LAST<i class="us">_</i></b></div><div class="c" style="left:332px;width:65px"><b>4</b></div><div class="c" style="left:397px;width:95px"><b>PAY<i class="us">_</i>PERIOD</b></div><div class="c" style="left:492px;width:83px"><b><i class="as">*</i>F<i class="as">*****</i>U<i class="as">**</i>MP<i class="as">*</i></b></div><div class="c" style="left:575px;width:185px"><b></b></div><div class="c" style="left:760px;width:59px"><i class="cb"><svg width="13" height="13" class="ck"><path d="M3 6.2 L5.2 8.6 L10 3.6" fill="none" stroke="#21a121" stroke-width="2.2"/></svg></i></div></div>
<div class="row ra" style="top:485px"><div class="c num" style="left:23px;width:77px"><b>404</b></div><div class="c" style="left:100px;width:137px"><b>LAST<i class="us">_</i>4<i class="us">_</i>CMSP<i class="us">_</i>2</b></div><div class="c" style="left:237px;width:95px"><b>PPERIOD3<i class="us">_</i>LAST<i class="us">_</i></b></div><div class="c" style="left:332px;width:65px"><b>4</b></div><div class="c" style="left:397px;width:95px"><b>PAY<i class="us">_</i>PERIOD</b></div><div class="c" style="left:492px;width:83px"><b><i class="as">*</i>F<i class="as">*****</i>U<i class="as">**</i>MP<i class="as">*</i></b></div><div class="c" style="left:575px;width:185px"><b></b></div><div class="c" style="left:760px;width:59px"><i class="cb"></i></div></div><div class="a" style="left:99px;top:111px;width:1px;height:391px;background:#a4a190"></div><div class="a" style="left:236px;top:111px;width:1px;height:391px;background:#a4a190"></div><div class="a" style="left:331px;top:111px;width:1px;height:391px;background:#a4a190"></div><div class="a" style="left:396px;top:111px;width:1px;height:391px;background:#a4a190"></div><div class="a" style="left:491px;top:111px;width:1px;height:391px;background:#a4a190"></div><div class="a" style="left:574px;top:111px;width:1px;height:391px;background:#a4a190"></div><div class="a" style="left:759px;top:111px;width:1px;height:391px;background:#a4a190"></div><div class="a" style="left:818px;top:111px;width:1px;height:391px;background:#a4a190"></div>
<div id="sb"></div>
<div id="status"></div>
<svg class="a" style="left:0;top:0" width="40" height="34" viewBox="0 0 40 34">
<defs><radialGradient id="tg" cx="0.4" cy="0.3" r="0.75"><stop offset="0" stop-color="#40f080"/><stop offset="0.55" stop-color="#20b050"/><stop offset="1" stop-color="#107030"/></radialGradient></defs>
<rect x="13.8" y="18" width="2" height="7.5" fill="#0a1838"/>
<path d="M7.5 13.5 Q8 11 11 11 Q13 10 16 10.8 Q19 11 19.5 13 Q21.8 14 21 16.5 Q20 19.5 16 19.5 Q12 20 9.5 19 Q7 18 8 16 Q6.8 15 7.5 13.5 Z" fill="url(#tg)"/>
<path d="M9 13.5 Q12 12 16 13" stroke="#60ff98" stroke-width="1" fill="none" stroke-opacity="0.6"/>
</svg><svg class="a" style="left:770;top:0;left:770px" width="88" height="34" viewBox="770 0 88 34">
<defs>
<linearGradient id="bb" x1="0" y1="0" x2="1" y2="1"><stop offset="0" stop-color="#5c8ef8"/><stop offset="0.35" stop-color="#2a64ee"/><stop offset="1" stop-color="#1a50e0"/></linearGradient>
<linearGradient id="rb" x1="0" y1="0" x2="1" y2="1"><stop offset="0" stop-color="#f0a080"/><stop offset="0.35" stop-color="#e06038"/><stop offset="1" stop-color="#c83c14"/></linearGradient>
</defs>
<rect x="773.5" y="6.5" width="24" height="24" rx="3" fill="url(#bb)" stroke="#fff" stroke-width="1.2"/>
<rect x="778" y="23" width="9" height="3" fill="#fff"/>
<rect x="800.5" y="6.5" width="24" height="24" rx="3" fill="url(#bb)" stroke="#fff" stroke-width="1.2"/>
<rect x="806.5" y="12.5" width="12" height="12" fill="none" stroke="#fff" stroke-width="1.4"/>
<rect x="806" y="12" width="13" height="3" fill="#fff"/>
<rect x="827.5" y="6.5" width="24" height="24" rx="3" fill="url(#rb)" stroke="#fff" stroke-width="1.2"/>
<path d="M833 12 L846.5 25.5 M846.5 12 L833 25.5" stroke="#fff" stroke-width="3.2"/>
</svg><svg class="a" style="left:9px;top:93px" width="15" height="18" viewBox="9 93 15 18">
<defs><linearGradient id="kb" x1="0" y1="0" x2="0" y2="1"><stop offset="0" stop-color="#d8e4f8"/><stop offset="0.5" stop-color="#eef2fa"/><stop offset="1" stop-color="#f4f4f0"/></linearGradient></defs>
<rect x="10.5" y="94.5" width="12" height="15" rx="2" fill="url(#kb)" stroke="#44546e"/>
<path d="M16.5 101.5 L21.5 107.5" stroke="#000" stroke-width="3.4" stroke-linecap="square"/>
<path d="M19 106.5 l-1.5 1.5" stroke="#000" stroke-width="1.6"/>
<ellipse cx="14" cy="99.6" rx="4.2" ry="3.9" fill="#000"/>
<ellipse cx="14" cy="99.6" rx="3.3" ry="3" fill="#f4f410"/>
<path d="M16.8 102 L21.2 107.2" stroke="#f4f410" stroke-width="1.5"/>
<circle cx="13" cy="98.8" r="1.2" fill="#000"/>
</svg><svg class="a" style="left:13px;top:112px" width="9" height="13" viewBox="13 112 9 13"><path d="M14 113 L20.5 118.5 L14 124 Z" fill="#000"/></svg><svg class="a" style="left:826px;top:93px" width="24" height="416" viewBox="826 93 24 416">
<defs>
<linearGradient id="sbt" x1="0" y1="0" x2="1" y2="1"><stop offset="0" stop-color="#e0e8fe"/><stop offset="1" stop-color="#b8cafa"/></linearGradient>
<linearGradient id="sth" x1="0" y1="0" x2="1" y2="0"><stop offset="0" stop-color="#cad8fc"/><stop offset="0.5" stop-color="#c4d4fc"/><stop offset="1" stop-color="#b8caf8"/></linearGradient>
</defs>
<rect x="830.5" y="94.5" width="17" height="18" rx="2.5" fill="none" stroke="#a8b4d0" stroke-opacity="0.7"/><rect x="831.5" y="95.5" width="15" height="16" rx="2" fill="url(#sbt)" stroke="#fff"/>
<path d="M835 105.5 L839 101.5 L843 105.5" fill="none" stroke="#4d6185" stroke-width="2"/>
<rect x="831.5" y="113.5" width="15" height="56" rx="2" fill="url(#sth)" stroke="#fff"/>
<rect x="830.5" y="112.5" width="17" height="58" rx="2.5" fill="none" stroke="#b0c2ee" stroke-opacity="0.6"/>
<path d="M835 139.5h6M835 141.5h6M835 143.5h6M835 145.5h6" stroke="#8ea6e4"/>
<rect x="830.5" y="488.5" width="17" height="18" rx="2.5" fill="none" stroke="#a8b4d0" stroke-opacity="0.7"/><rect x="831.5" y="489.5" width="15" height="16" rx="2" fill="url(#sbt)" stroke="#fff"/>
<path d="M835 496 L839 500 L843 496" fill="none" stroke="#4d6185" stroke-width="2"/>
</svg><svg class="a" style="left:0;top:509px" width="858" height="27" viewBox="0 509 858 27">
<path d="M239.5 514v17M281.5 514v17M323.5 514v17" stroke="#c4c1b0"/>
<path d="M240.5 514v17M282.5 514v17M324.5 514v17" stroke="#fff"/>
<path d="M849 521h2M845 525h2M849 525h2M841 529h2M845 529h2M849 529h2" stroke="#b8b4a2" stroke-width="2"/>
<path d="M850 522.5h1.5M846 526.5h1.5M850 526.5h1.5M842 530.5h1.5M846 530.5h1.5M850 530.5h1.5" stroke="#fff" stroke-width="1" stroke-opacity="0.9"/>
</svg></body></html>
